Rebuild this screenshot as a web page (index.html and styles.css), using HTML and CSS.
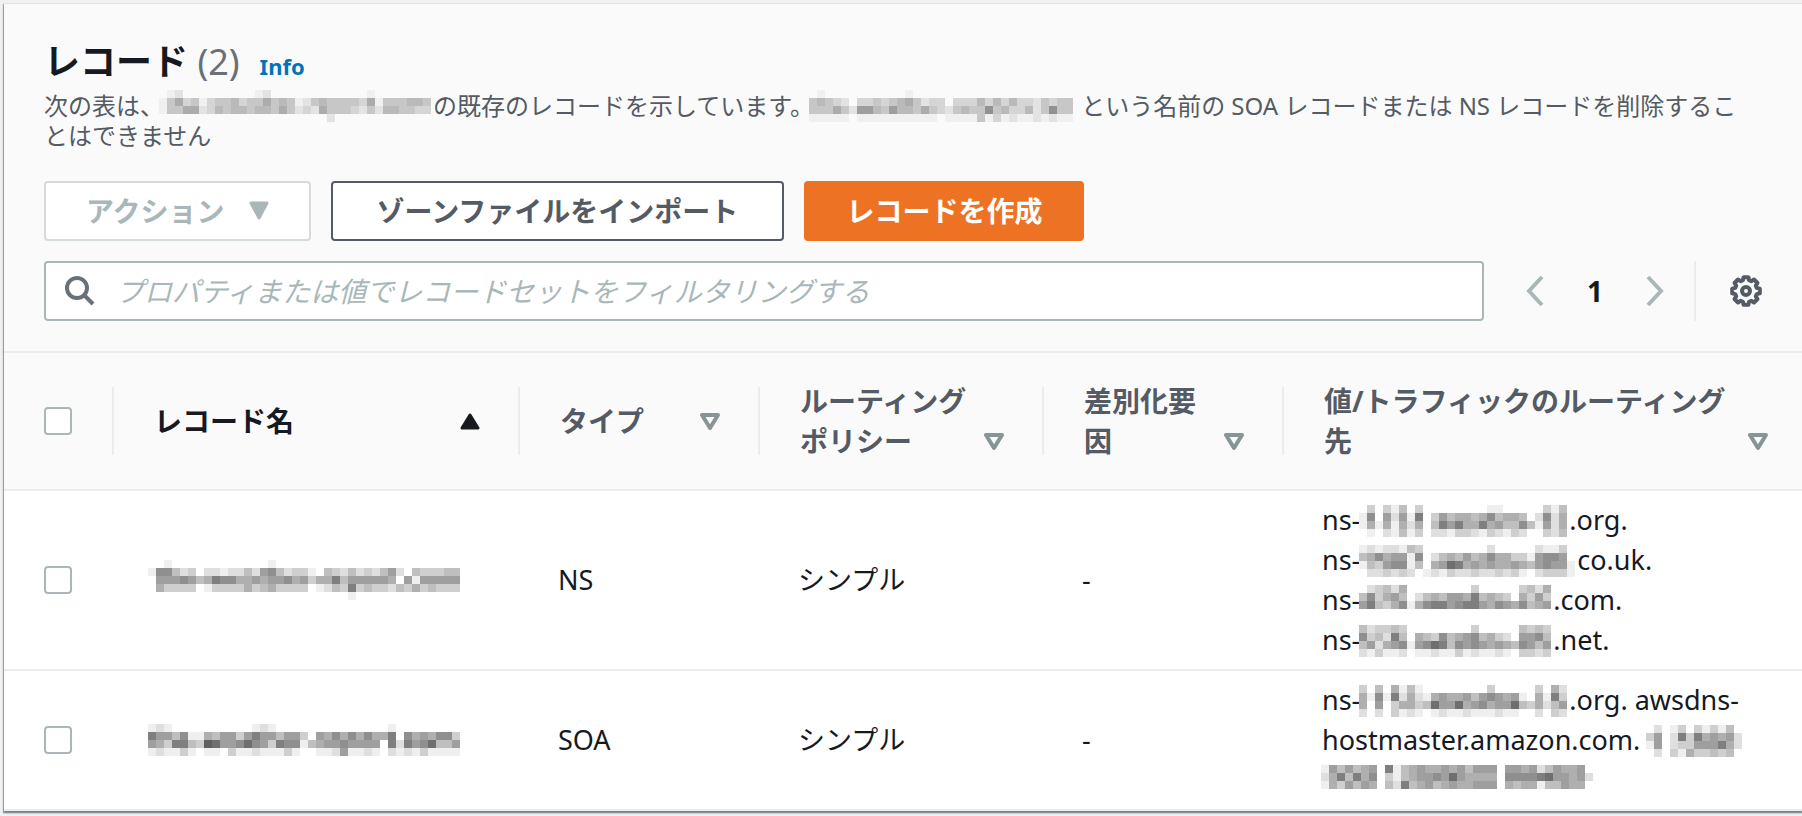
FILE: index.html
```html
<!DOCTYPE html>
<html lang="ja">
<head>
  <meta charset="UTF-8" />
  <meta name="viewport" content="width=device-width, initial-scale=1.0"/>
  <title>レコード</title>
  <link rel="stylesheet" href="styles.css">
</head>
<body>
  <main class="panel">
    <header class="panel-header">
      <div class="title-row">
        <h1>レコード <span class="count">(2)</span></h1>
        <a class="info" href="#">Info</a>
      </div>
      <p class="description">次の表は、<svg class="mosaic" data-rows="0120000000001200000000000010000000 1463413445344645412454444361444554 1446623545545546423264443242554433 0000000000000000000002000000000000"></svg>の既存のレコードを示しています。<svg class="mosaic" data-rows="010000000000100000000000000000000 454320334345642330333535353324344 444642775475546432454484533524844 111110111111111101111413121121211"></svg> という名前の SOA レコードまたは NS レコードを削除することはできません</p>

      <div class="actions">
        <button class="btn btn-disabled" disabled>アクション
          <svg class="icon-sort" viewBox="0 0 20 20" aria-hidden="true"><path d="M2 2H18L10 17Z" fill="currentColor" stroke="currentColor" stroke-width="3" stroke-linejoin="round"/></svg>
        </button>
        <button class="btn btn-wide">ゾーンファイルをインポート</button>
        <button class="btn btn-primary">レコードを作成</button>
      </div>

      <div class="toolbar">
        <div class="search">
          <svg class="icon-search" viewBox="0 0 32 32" aria-hidden="true"><circle cx="13" cy="13" r="10" /><path d="M20 20L29 29"/></svg>
          <input type="search" aria-label="レコードを検索" placeholder="プロパティまたは値でレコードセットをフィルタリングする">
        </div>
        <nav class="pager" aria-label="ページ">
          <button class="icon-btn" aria-label="前へ"><svg class="icon-arrow" viewBox="0 0 18 32"><path d="M16 2L3 16L16 30"/></svg></button>
          <span class="page">1</span>
          <button class="icon-btn" aria-label="次へ"><svg class="icon-arrow" viewBox="0 0 18 32"><path d="M2 2L15 16L2 30"/></svg></button>
        </nav>
        <div class="settings">
          <button class="icon-btn" aria-label="設定">
            <svg class="icon-gear" viewBox="0 0 32 32"><path d="M13.6 2.2H18.4L19.1 5.2L21.4 6.2L24 4.5L27.5 8L25.8 10.6L26.8 12.9L29.8 13.6V18.4L26.8 19.1L25.8 21.4L27.5 24L24 27.5L21.4 25.8L19.1 26.8L18.4 29.8H13.6L12.9 26.8L10.6 25.8L8 27.5L4.5 24L6.2 21.4L5.2 19.1L2.2 18.4V13.6L5.2 12.9L6.2 10.6L4.5 8L8 4.5L10.6 6.2L12.9 5.2Z"/><circle cx="16" cy="16" r="4"/></svg>
          </button>
        </div>
      </div>
    </header>

    <table class="records">
      <colgroup>
        <col class="col-check">
        <col class="col-name">
        <col class="col-type">
        <col class="col-policy">
        <col class="col-diff">
        <col>
      </colgroup>
      <thead>
        <tr>
          <th><input type="checkbox" aria-label="すべて選択"></th>
          <th class="sorted"><div class="th-inner"><span>レコード名</span><button class="icon-btn" aria-label="並べ替え"><svg class="icon-sort" viewBox="0 0 20 20"><path d="M10 4L18 17H2Z" fill="currentColor" stroke="currentColor" stroke-width="3" stroke-linejoin="round"/></svg></button></div></th>
          <th><div class="th-inner"><span>タイプ</span><button class="icon-btn" aria-label="並べ替え"><svg class="icon-sort" viewBox="0 0 20 20"><path d="M2 4H18L10 17Z"/></svg></button></div></th>
          <th><div class="th-inner"><span>ルーティングポリシー</span><button class="icon-btn" aria-label="並べ替え"><svg class="icon-sort" viewBox="0 0 20 20"><path d="M2 4H18L10 17Z"/></svg></button></div></th>
          <th><div class="th-inner"><span>差別化要因</span><button class="icon-btn" aria-label="並べ替え"><svg class="icon-sort" viewBox="0 0 20 20"><path d="M2 4H18L10 17Z"/></svg></button></div></th>
          <th><div class="th-inner"><span>値/トラフィックのルーティング先</span><button class="icon-btn" aria-label="並べ替え"><svg class="icon-sort" viewBox="0 0 20 20"><path d="M2 4H18L10 17Z"/></svg></button></div></th>
        </tr>
      </thead>
      <tbody>
        <tr>
          <td><input type="checkbox" aria-label="NS レコードを選択"></td>
          <td><svg class="mosaic" data-rows="001000000000000100000000000000000000000 177423022122426742331043242324620433344 066676458775565667563558466666506166666 053333013333534533330124383433243534333 000000000000000000000000010000000000000"></svg></td>
          <td>NS</td>
          <td>シンプル</td>
          <td>-</td>
          <td>
            ns-<svg class="mosaic" data-rows="03031403000000001100000314 17062618036455457455402725 15151525048685585644741625 01021413022133213213200324"></svg>.org.<br>
            ns-<svg class="mosaic" data-rows="121221430000000020000021130 457566170245464575533167760 143677140569856565565467661 022323201213223223231023331"></svg>co.uk.<br>
            ns-<svg class="mosaic" data-rows="023425000000003000003425 473564024546658454305363 684357157886788657657456 000000000000000000000000"></svg>.com.<br>
            ns-<svg class="mosaic" data-rows="423343000000003000004343 734284054374567453206674 462567167984767656547646 213112011211312112103323"></svg>.net.
          </td>
        </tr>
        <tr>
          <td><input type="checkbox" aria-label="SOA レコードを選択"></td>
          <td><svg class="mosaic" data-rows="121000000000012100000000000000100000000 866471154663686646630657575755807565773 6538843a9667976387714566766660828679446 121131011031121113100112611210212131111"></svg></td>
          <td>SOA</td>
          <td>シンプル</td>
          <td>-</td>
          <td>
            ns-<svg class="mosaic" data-rows="30405141000000003000003052 51718252156556467656105183 50603553496695675669435246 20203121012112111211002032"></svg>.org. awsdns-hostmaster.amazon.com. <svg class="mosaic" data-rows="020130313140 360283856562 160233666852 020315334340"></svg> <svg class="mosaic" data-rows="1646456081456556564666066562465560 2584857031456676965555077778966562 1536465042845645655666054551446550 0000000000000000000000000000000000"></svg>
          </td>
        </tr>
      </tbody>
    </table>
  </main>

  <script src="script.js"></script>
</body>
</html>
```
FILE: styles.css
```css
* {
  box-sizing: border-box;
}
body {
  margin: 0;
  padding: 4px 0 4px 4px;
  background: #f0f1f1;
  color: #16191f;
  font-family: "Noto Sans", "Noto Sans CJK JP", sans-serif;
  font-size: 28px;
  line-height: 40px;
}
.panel {
  background: #fff;
  box-shadow: 0 1px 1px 1px rgba(0, 28, 36, 0.3), 0 2px 2px 0 rgba(0, 28, 36, 0.3);
}
.panel-header {
  padding: 36px 40px 30px;
  background: #fafafa;
}
.title-row {
  display: flex;
  align-items: baseline;
  gap: 20px;
}
h1 {
  margin: 0;
  font-size: 36px;
  line-height: 44px;
}
.count {
  color: #687078;
  font-weight: 400;
}
.info {
  color: #0073bb;
  font-size: 22px;
  font-weight: 700;
  text-decoration: none;
}
.description {
  margin: 5px 0 30px;
  padding-right: 20px;
  color: #545b64;
  font-size: 24px;
  line-height: 30px;
}
.mosaic {
  margin: -4px 2px -4px -5px;
  vertical-align: -3px;
}
.description .mosaic {
  opacity: 0.85;
}

/* buttons */
.actions {
  display: flex;
  gap: 20px;
  margin-bottom: 20px;
}
.btn {
  display: flex;
  align-items: center;
  gap: 24px;
  height: 60px;
  padding: 0 40px;
  border: 2px solid #545b64;
  border-radius: 4px;
  background: #fff;
  color: #545b64;
  font: inherit;
  font-weight: 700;
  cursor: pointer;
}
.btn-wide {
  padding: 0 44px;
}
.btn-disabled {
  border-color: #d5dbdb;
  color: #aab7b8;
  cursor: default;
}
.btn-primary {
  border-color: #ee7223;
  background: #ee7223;
  color: #fff;
}
.icon-btn {
  display: flex;
  padding: 0;
  border: 0;
  background: none;
  color: inherit;
  cursor: pointer;
}

/* search + pager */
.toolbar {
  display: flex;
  align-items: center;
}
.search {
  display: flex;
  align-items: center;
  flex: 1;
  gap: 20px;
  height: 60px;
  padding-left: 18px;
  border: 2px solid #aab7b8;
  border-radius: 4px;
  background: #fff;
}
.search input {
  flex: 1;
  min-width: 0;
  height: 56px;
  padding: 0;
  border: 0;
  outline: 0;
  background: none;
  color: inherit;
  font: inherit;
}
.search input::placeholder {
  color: #aab7b8;
  font-style: italic;
}
.pager {
  display: flex;
  align-items: center;
  padding: 0 30px 0 42px;
  color: #aab7b8;
}
.page {
  width: 102px;
  color: #16191f;
  font-weight: 700;
  text-align: center;
}
.settings {
  display: flex;
  align-items: center;
  height: 60px;
  padding-left: 34px;
  border-left: 2px solid #eaeded;
  color: #545b64;
}

/* icons */
svg {
  fill: none;
  stroke: currentColor;
}
.icon-search {
  width: 32px;
  height: 32px;
  color: #687078;
  stroke-width: 4;
}
.icon-arrow {
  width: 18px;
  height: 32px;
  stroke-width: 4;
}
.icon-gear {
  width: 32px;
  height: 32px;
  stroke-width: 4;
  stroke-linejoin: round;
}
.icon-sort {
  width: 20px;
  height: 20px;
  stroke-width: 4;
  stroke-linejoin: round;
}

/* table */
.records {
  width: 100%;
  border-collapse: separate;
  border-spacing: 0;
  table-layout: fixed;
}
.col-check { width: 110px; }
.col-name { width: 406px; }
.col-type { width: 240px; }
.col-policy { width: 284px; }
.col-diff { width: 240px; }
th, td {
  border-bottom: 2px solid #eaeded;
  text-align: left;
  vertical-align: middle;
}
td {
  padding: 9px 38px;
  font-size: 27px;
}
th {
  padding: 28px 40px;
  border-top: 2px solid #eaeded;
  background: #fafafa linear-gradient(#eaeded, #eaeded) no-repeat right center / 2px 50%;
  color: #545b64;
}
th:last-child {
  padding-right: 34px;
  background-image: none;
}
td:last-child {
  padding-right: 34px;
}
th:first-child, td:first-child {
  padding-left: 40px;
  padding-right: 0;
}
td .mosaic {
  margin-left: -1px;
}
td .mosaic:only-child {
  display: block;
  margin-left: -4px;
}
.sorted {
  color: #16191f;
}
.th-inner {
  display: flex;
  align-items: flex-end;
  justify-content: space-between;
  gap: 12px;
}
.th-inner .icon-btn {
  height: 40px;
  align-items: center;
  color: #879596;
}
.sorted .icon-btn {
  color: #16191f;
}
input[type="checkbox"] {
  display: block;
  appearance: none;
  width: 28px;
  height: 28px;
  margin: 0;
  border: 2px solid #aab7b8;
  border-radius: 4px;
  background: #fff;
}
```
FILE: script.js
```js
// hidden names: each hex digit is one 8px square, 0 is empty, higher is darker
const CELL = 8;

document.querySelectorAll(".mosaic").forEach(svg => {
  const rows = svg.dataset.rows.split(" ");
  svg.setAttribute("width", rows[0].length * CELL);
  svg.setAttribute("height", rows.length * CELL);
  svg.setAttribute("shape-rendering", "crispEdges");
  svg.setAttribute("aria-hidden", "true");

  let cells = "";
  rows.forEach((row, y) => {
    [...row].forEach((digit, x) => {
      const level = parseInt(digit, 16);
      if (level === 0) return;
      const grey = 255 - level * 16;
      cells += `<rect x="${x * CELL}" y="${y * CELL}" width="${CELL}" height="${CELL}" fill="rgb(${grey},${grey},${grey})" stroke="none"/>`;
    });
  });
  svg.innerHTML = cells;
});
```
